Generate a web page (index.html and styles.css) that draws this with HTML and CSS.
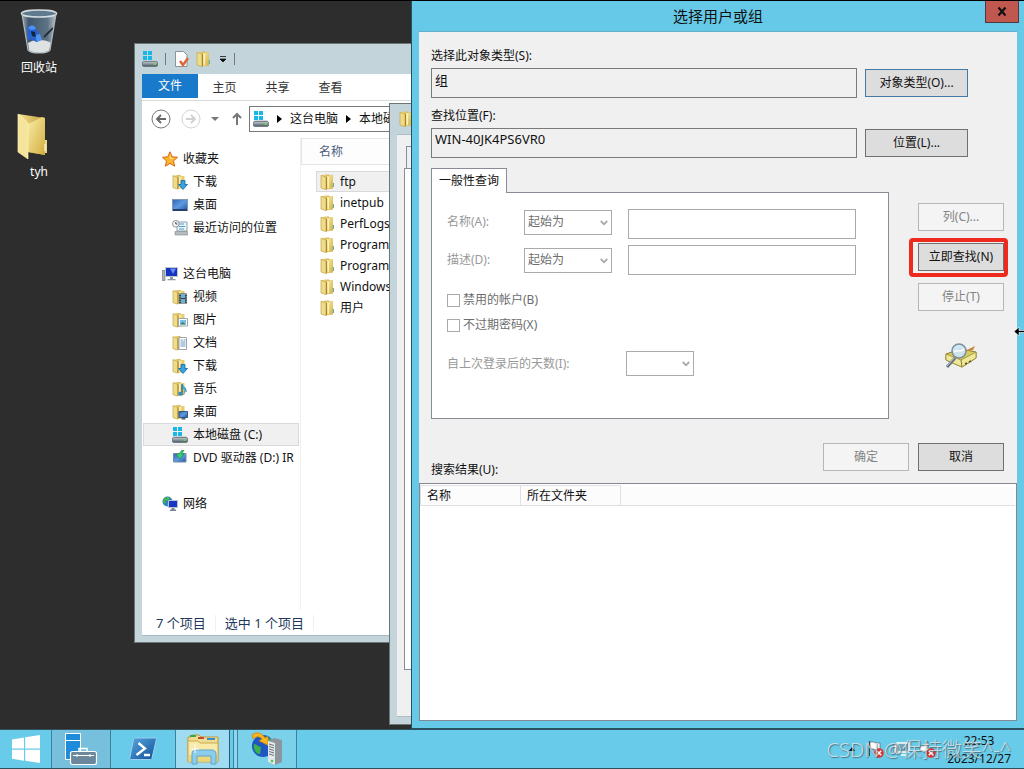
FILE: index.html
```html
<!DOCTYPE html>
<html lang="zh-CN">
<head>
<meta charset="utf-8">
<title>选择用户或组</title>
<link rel="stylesheet" href="styles.css">
</head>
<body>
<svg class="defs" aria-hidden="true">
  <defs>
    <linearGradient id="gold" x1="0" x2="1" y1="0" y2="1"><stop offset="0" stop-color="#f9eca6"/><stop offset="1" stop-color="#d3ae3f"/></linearGradient>
    <linearGradient id="goldDark" x1="0" x2="1"><stop offset="0" stop-color="#f3e294"/><stop offset="1" stop-color="#c49c36"/></linearGradient>
    <linearGradient id="screen" x1="0" x2="1" y1="0" y2="1"><stop offset="0" stop-color="#2f62b5"/><stop offset=".5" stop-color="#5f9be0"/><stop offset="1" stop-color="#1f55a8"/></linearGradient>
    <linearGradient id="metal" x1="0" x2="0" y1="0" y2="1"><stop offset="0" stop-color="#c4ccd1"/><stop offset="1" stop-color="#4e5c66"/></linearGradient>
    <linearGradient id="glass" x1="0" x2="1"><stop offset="0" stop-color="#9aa9b5"/><stop offset=".2" stop-color="#3f566b"/><stop offset=".75" stop-color="#5e7385"/><stop offset="1" stop-color="#b9c3ca"/></linearGradient>
    <linearGradient id="psBlue" x1="0" x2="1" y1="0" y2="1"><stop offset="0" stop-color="#5aa7e0"/><stop offset="1" stop-color="#0d4f96"/></linearGradient>
    <symbol id="folder" viewBox="0 0 16 16"><path d="M1 1.300 5.500.5H9l.5 1H13v13H6z" fill="url(#goldDark)"/><path d="M7 2 13 1.500v12.500l-6 1.500z" fill="url(#gold)"/><path d="M1 1.300 6 3v12.600l-5-1.600z" fill="#efdc8a" stroke="#c4a448" stroke-width=".7"/><path d="M6.500 3v12.400" stroke="#a8842a" stroke-width="1"/><path d="M8.300 3v11" stroke="#fff5c0" stroke-width="1.200"/><path d="M12.800 9h1.200v4h-1.200z" fill="#6fae9f"/></symbol>
    <symbol id="download" viewBox="0 0 16 16"><use href="#folder" width="15" height="16"/><path d="M9 6.500h4v4h2.500L11 15.500 6.500 10.500H9z" fill="#35a4e6" stroke="#17659f" stroke-width=".8"/></symbol>
    <symbol id="desktop" viewBox="0 0 16 16"><rect x=".5" y="2.500" width="15" height="11" fill="url(#screen)" stroke="#8297b3"/><path d="M1 12h14v2H1z" fill="#263f66"/></symbol>
    <symbol id="recent" viewBox="0 0 16 16"><path d="M5 2h10v9H5z" fill="#eef5f9" stroke="#8fa2ae"/><path d="M7 4h5M7 6.500h6M7 9h5" stroke="#4e9cc4"/><path d="M3 11.500h12.500V15H3z" fill="#b5bcc0" stroke="#7d878d" stroke-width=".6"/><circle cx="3.800" cy="3.800" r="3.300" fill="#f5f7f8" stroke="#8a959c"/><path d="M3.800 2v2h1.700" fill="none" stroke="#445"/></symbol>
    <symbol id="star" viewBox="0 0 16 16"><path d="m8 .8 2.200 5 5.300.5-4 3.600 1.200 5.300L8 12.400l-4.700 2.800 1.200-5.300-4-3.600 5.300-.5z" fill="#fbb62c" stroke="#d5661d"/><path d="M8 3 9.300 7 13 7.300l-5 1z" fill="#ffe68a"/></symbol>
    <symbol id="computer" viewBox="0 0 16 16"><rect x=".5" y="4.500" width="2.500" height="10" fill="#a9b3b9" stroke="#69747b" stroke-width=".6"/><rect x="3.500" y="1.500" width="12" height="9" fill="#1633c2" stroke="#c0c7cc"/><path d="M8 2.500h6L11 8z" fill="#6c8cf2"/><path d="M8 11h3v2h2.500v1.300h-8V13H8z" fill="#8c979e"/></symbol>
    <symbol id="video" viewBox="0 0 16 16"><use href="#folder" width="15" height="16"/><path d="M7 4.500h8v10H7z" fill="#3b4146"/><path d="M9 5h4v4H9zm0 5h4v4H9z" fill="#65b4d8"/><path d="M8 5v9M14.200 5v9" stroke="#dde3e6" stroke-dasharray="1 1.300"/></symbol>
    <symbol id="picture" viewBox="0 0 16 16"><use href="#folder" width="15" height="16"/><path d="M6.500 6.500h9v7.500h-9z" fill="#fff" stroke="#9aa7ad"/><path d="M8 8h6v4.500H8z" fill="#74bfe3"/><path d="m8 12.500 2.500-2.500 3.500 2.500z" fill="#3e7d58"/></symbol>
    <symbol id="document" viewBox="0 0 16 16"><use href="#folder" width="15" height="16"/><path d="M7 2.500h7.500v12H7z" fill="#fff" stroke="#9aa7ad"/><path d="M8.500 5h2m1 0h2M8.500 7h5m-5 2h5m-5 2h5" stroke="#6d93bd"/></symbol>
    <symbol id="music" viewBox="0 0 16 16"><use href="#folder" width="15" height="16"/><path d="M10 3.500v8" stroke="#1d78a8" stroke-width="1.500"/><path d="M10 3c1 3 5 3.500 4 8 0-2.500-2-3.500-4-4z" fill="#47a8d8" stroke="#1d78a8" stroke-width=".6"/><ellipse cx="8.700" cy="12.700" rx="2.500" ry="2" fill="#2b8fc4"/></symbol>
    <symbol id="deskfolder" viewBox="0 0 16 16"><use href="#folder" width="15" height="16"/><path d="M7 7.500h8.500v6H7z" fill="url(#screen)" stroke="#35587f"/><path d="M9.500 14h4v1.500h-4z" fill="#53606a"/></symbol>
    <symbol id="drive" viewBox="0 0 16 16"><path d="M1 0h4v4H1zM6 0h4v4H6zM1 5h4v4H1zM6 5h4v4H6z" fill="#17b8e8"/><path d="M2 9.300h12l1.800 2.200H.2z" fill="#c3cace"/><rect x=".4" y="10.500" width="15.200" height="4.900" rx="1.300" fill="url(#metal)" stroke="#56636c" stroke-width=".7"/><path d="M11.500 12.300h2.500v1.500h-2.500z" fill="#69df45"/></symbol>
    <symbol id="dvd" viewBox="0 0 16 16"><path d="M1.500 3.500h12.500v8.500H1.500z" fill="url(#screen)" stroke="#788da2"/><path d="M10 0 7 4H4l3.500 5L12 4H9.800L12 0z" fill="#39ce70" stroke="#178345" stroke-width=".6"/></symbol>
    <symbol id="network" viewBox="0 0 16 16"><circle cx="5.500" cy="5.500" r="5" fill="#2b81c9"/><path d="M2 3c2-3 5-2 6-1L6 5 4 4 3 8 1 6zm3 5 4-2v3l-3 1z" fill="#45b64c"/><path d="M6.500 4.500h9v7h-9z" fill="#1637c7" stroke="#b9c4cb"/><path d="M9.500 12h3v1.500H14V15H8v-1.500h1.500z" fill="#7b8790"/></symbol>
    <symbol id="chevron" viewBox="0 0 8 6"><path d="m.8 1 3.200 3.300L7.200 1" fill="none" stroke="#a9a9a9" stroke-width="1.800"/></symbol>
    <symbol id="crossbadge" viewBox="0 0 9 9"><circle cx="4.500" cy="4.500" r="4.300" fill="#d33"/><path d="m2.500 2.500 4 4m0-4-4 4" stroke="#fff" stroke-width="1.400"/></symbol>
  </defs>
</svg>

<main class="desktop">
  <div class="shortcut shortcut-bin">
    <svg class="bin-icon" viewBox="0 0 38 46"><path d="m2 4 6 37c3 4 19 4 22 0l6-37z" fill="url(#glass)"/><path d="m8 34 1 7c4 4 17 4 20 0l2-7c-5-4-18-4-23 0z" fill="#dfe2e3"/><path d="M7 19c3-4 8-3 9 1l3 4 2 7-5 2-4-3-4 1z" fill="#2563d0"/><path d="M8 19c3-4 7-3 8 1l-5 1zm7 7 5-1 2 6-5 2z" fill="#4d92ee"/><path d="m11 22 4 1 1 5-4-1z" fill="#14243d"/><path d="m33 19-9 9" stroke="#24313b" stroke-width="2"/><ellipse cx="19" cy="4.500" rx="17.500" ry="3.500" fill="#5f7a8f" stroke="#d6dde1" stroke-width="1.500"/><path d="m2 5 6 36c4 4 18 4 22 0l6-36" fill="none" stroke="#b2bbc0" stroke-width="1.200"/></svg>
    <span>回收站</span>
  </div>
  <div class="shortcut shortcut-folder">
    <svg class="big-folder" viewBox="0 0 32 46"><path d="m1 1 27 4v37l-17-3z" fill="url(#goldDark)"/><path d="m11 11 14-7 3 1v37l-17-3z" fill="url(#gold)"/><path d="m1 1 10 9v36L1 39z" fill="#f5e59a" stroke="#fff3b8" stroke-width=".7"/><path d="M28 27h2v13h-2z" fill="#e9d78a"/><path d="M28 31v7" stroke="#fff"/></svg>
    <span>tyh</span>
  </div>

  <section class="window explorer">
    <header class="quick-bar">
      <svg class="ico"><use href="#drive"/></svg><i class="bar"></i>
      <svg class="ico" viewBox="0 0 16 16"><path d="M2.500.500h8L14 4v11.500H2.500z" fill="#fdfdfd" stroke="#8d9497"/><path d="m7 10 3 4 5-7" fill="none" stroke="#e0643a" stroke-width="2.500"/></svg>
      <svg class="ico"><use href="#folder"/></svg>
      <svg class="mini" viewBox="0 0 8 8"><path d="M1 1.500h6M1 4h6L4 7z" fill="#111" stroke="#111" stroke-width=".8"/></svg><i class="bar"></i>
    </header>
    <div class="explorer-body">
      <nav class="ribbon"><button class="file-tab">文件</button><button>主页</button><button>共享</button><button>查看</button></nav>
      <div class="nav-row">
        <svg class="round" viewBox="0 0 20 20"><circle cx="10" cy="10" r="9" fill="none" stroke="#777"/><path d="M15 10H6m4-4-4 4 4 4" fill="none" stroke="#666" stroke-width="1.800"/></svg>
        <svg class="round" viewBox="0 0 20 20"><circle cx="10" cy="10" r="9" fill="none" stroke="#d4d4d4"/><path d="M5 10h9m-4-4 4 4-4 4" fill="none" stroke="#d0d0d0" stroke-width="1.800"/></svg>
        <svg class="mini" viewBox="0 0 8 8"><path d="M0 2h8L4 6z" fill="#777"/></svg>
        <svg class="up" viewBox="0 0 10 14"><path d="M5 13V2M1 6l4-4 4 4" fill="none" stroke="#777" stroke-width="2"/></svg>
        <div class="address"><svg class="ico"><use href="#drive"/></svg><svg class="tri" viewBox="0 0 5 8"><path d="m0 0 5 4-5 4z"/></svg><span>这台电脑</span><svg class="tri" viewBox="0 0 5 8"><path d="m0 0 5 4-5 4z"/></svg><span>本地磁盘 (C:)</span></div>
      </div>
      <div class="panes">
        <ul class="tree">
          <li class="root"><svg class="ico"><use href="#star"/></svg>收藏夹</li>
          <li><svg class="ico"><use href="#download"/></svg>下载</li>
          <li><svg class="ico"><use href="#desktop"/></svg>桌面</li>
          <li><svg class="ico"><use href="#recent"/></svg>最近访问的位置</li>
          <li class="root spaced"><svg class="ico"><use href="#computer"/></svg>这台电脑</li>
          <li><svg class="ico"><use href="#video"/></svg>视频</li>
          <li><svg class="ico"><use href="#picture"/></svg>图片</li>
          <li><svg class="ico"><use href="#document"/></svg>文档</li>
          <li><svg class="ico"><use href="#download"/></svg>下载</li>
          <li><svg class="ico"><use href="#music"/></svg>音乐</li>
          <li><svg class="ico"><use href="#deskfolder"/></svg>桌面</li>
          <li class="selected"><svg class="ico"><use href="#drive"/></svg>本地磁盘 (C:)</li>
          <li><svg class="ico"><use href="#dvd"/></svg>DVD 驱动器 (D:) IR</li>
          <li class="root spaced"><svg class="ico"><use href="#network"/></svg>网络</li>
        </ul>
        <div class="files">
          <div class="files-head">名称</div>
          <ul>
            <li class="selected"><svg class="ico"><use href="#folder"/></svg>ftp</li>
            <li><svg class="ico"><use href="#folder"/></svg>inetpub</li>
            <li><svg class="ico"><use href="#folder"/></svg>PerfLogs</li>
            <li><svg class="ico"><use href="#folder"/></svg>Program</li>
            <li><svg class="ico"><use href="#folder"/></svg>Program</li>
            <li><svg class="ico"><use href="#folder"/></svg>Windows</li>
            <li><svg class="ico"><use href="#folder"/></svg>用户</li>
          </ul>
        </div>
      </div>
      <footer class="status"><span>7 个项目</span><span>选中 1 个项目</span></footer>
    </div>
  </section>

  <section class="window properties">
    <header><svg class="ico"><use href="#folder"/></svg></header>
    <div class="properties-body"><div class="stub-tab"></div><div class="stub-page"></div></div>
  </section>

  <section class="window dialog">
    <header class="dialog-title"><h1>选择用户或组</h1><button class="close" aria-label="关闭"><svg viewBox="0 0 10 9"><path d="M1.500.500 8.500 8.500m0-8-7 8" stroke="#111" stroke-width="2.200"/></svg></button></header>
    <form class="dialog-body">
      <div class="field"><label for="type">选择此对象类型(S):</label><div class="field-row"><input id="type" value="组" readonly><button type="button" class="btn focused">对象类型(O)...</button></div></div>
      <div class="field"><label for="place">查找位置(F):</label><div class="field-row"><input id="place" value="WIN-40JK4PS6VR0" readonly><button type="button" class="btn">位置(L)...</button></div></div>
      <div class="query">
        <div class="query-main">
          <button type="button" class="tab">一般性查询</button>
          <div class="page">
            <div class="criterion"><label for="name">名称(A):</label><span class="pick"><select disabled aria-label="名称条件"><option>起始为</option></select><svg><use href="#chevron"/></svg></span><input id="name" disabled></div>
            <div class="criterion"><label for="desc">描述(D):</label><span class="pick"><select disabled aria-label="描述条件"><option>起始为</option></select><svg><use href="#chevron"/></svg></span><input id="desc" disabled></div>
            <div class="checks"><label><input type="checkbox" disabled>禁用的帐户(B)</label><label><input type="checkbox" disabled>不过期密码(X)</label></div>
            <div class="days"><label for="days">自上次登录后的天数(I):</label><span class="pick"><select id="days" disabled><option></option></select><svg><use href="#chevron"/></svg></span></div>
          </div>
        </div>
        <div class="side">
          <button type="button" class="btn" disabled>列(C)...</button>
          <div class="marked"><button type="button" class="btn">立即查找(N)</button></div>
          <button type="button" class="btn" disabled>停止(T)</button>
          <svg class="finder" viewBox="0 0 32 26"><path d="m1 11 15-5 15 3v6L17 24 1 17z" fill="#d8cc62" stroke="#8f7f2c"/><path d="m1 11 15 6 15-8v6l-14 9-16-7z" fill="#efe89a" stroke="#8f7f2c" stroke-width=".7"/><path d="m16 17 1 7" stroke="#8f7f2c"/><path d="m18 9 12-6-2 4z" fill="#c8862e"/><path d="m20 21 2-1m2-1 2-1" stroke="#55521f" stroke-width="1.500"/><path d="m10 15-8 9" stroke="#69727b" stroke-width="3"/><path d="m9 15-7 8" stroke="#c4ccd2"/><circle cx="14" cy="8" r="7" fill="#cbe6f6" fill-opacity=".9" stroke="#7e8e9b" stroke-width="1.500"/><path d="M9 9c4-3 7 1 10-3" fill="none" stroke="#fff" stroke-width="1.500"/></svg>
        </div>
      </div>
      <div class="actions"><span class="result-label" id="results">搜索结果(U):</span><button type="button" class="btn" disabled>确定</button><button type="button" class="btn">取消</button></div>
      <div class="results"><table aria-labelledby="results"><thead><tr><th class="col">名称</th><th class="col">所在文件夹</th><th></th></tr></thead></table></div>
    </form>
    <svg class="cursor" viewBox="0 0 12 9"><path d="M0 4.500 5 0v3.500h7v2H5V9z" fill="#000" stroke="#fff" stroke-width=".6"/></svg>
  </section>
</main>

<footer class="taskbar">
  <button class="task start" aria-label="开始"><svg viewBox="0 0 28 28"><path d="m0 4.500 12-2v11H0zM13.200 2.300 28 0v13.500H13.200zM0 14.700h12v11l-12-2zM13.200 14.700H28V28l-14.800-2.200z" fill="#fff"/></svg></button>
  <button class="task server" aria-label="服务器管理器"><svg viewBox="0 0 34 34"><path d="M1.500 1.500h15v26h-15z" fill="#1e8bdb" stroke="#fff"/><path d="M2 8.500h14" stroke="#fff"/><path d="M15 20v-3.500h8V20" fill="none" stroke="#fff" stroke-width="1.500"/><rect x="6.500" y="19.500" width="26" height="13" rx="2" fill="#6b879c" stroke="#fff" stroke-width="1.200"/><path d="M9 23.500h21M13 22v3m13-3v3" stroke="#fff"/></svg></button>
  <button class="task shell" aria-label="PowerShell"><svg viewBox="0 0 28 24"><path d="M6 1h20c1 0 1.500.5 1.300 1.500L23 21c-.3 1-1 1.500-2 1.500H2c-1 0-1.500-.5-1.200-1.500L4.500 2.300C4.700 1.500 5 1 6 1z" fill="url(#psBlue)" stroke="#9bd0ee"/><path d="m9.500 6 6.500 5.500-8.500 6.500M15 18h6" fill="none" stroke="#fff" stroke-width="2.300"/></svg></button>
  <button class="task files-task" aria-label="文件资源管理器"><svg viewBox="0 0 34 32"><path d="M2 4h3l1-2h7l2 2h17v24H2z" fill="#efdc8e" stroke="#bb9b3f"/><path d="M4 2h6v2H4z" fill="#35a856"/><path d="M12 4h6v2h-6z" fill="#c64a2c"/><path d="M21 5h8v2h-8z" fill="#3b8bd2"/><path d="M2 8h10l2 2h18v19H2z" fill="#f8eaa9" stroke="#c9aa4e"/><path d="M3 22h28v6H3z" fill="#ecd57a"/><path d="M6 31V21c0-3 2-4 4-4h16c2 0 4 1 4 4v10h-5v-8H11v8z" fill="#8ccdec" stroke="#5ea5cb"/><path d="M9 11v9m-4-4h8" stroke="#fff"/></svg></button>
  <button class="task iis" aria-label="IIS 管理器"><svg viewBox="0 0 32 34"><circle cx="12" cy="14" r="11" fill="#1e56c4"/><path d="M3 12c3 0 4 3 7 3l-1 7C5 22 2 17 3 12zm9-8 8 3-3 7-5-3z" fill="#3cb346"/><path d="M1 3c5-4 10-2 13 3l3-2v9L8 9l3-2C8 4 5 4 2 7z" fill="#f9b71e" stroke="#c67d12" stroke-width=".7"/><path d="m17 9 6-3 8 2v22l-7 3-7-3z" fill="#8d969c"/><path d="m17 9 7 2v22l-7-3z" fill="#e3e7e9"/><path d="m18 12 5 1.500m-5 1 5 1.500m-5 1 5 1.500m-5 1 5 1.500m-5 1 5 1.500" stroke="#6c757b"/><circle cx="21" cy="29" r="1.300" fill="#3fd04d"/></svg></button>
  <div class="tray">
    <svg class="tray-arrow" viewBox="0 0 6 4"><path d="m3 0 3 4H0z"/></svg>
    <svg class="tray-icon" viewBox="0 0 18 18"><path d="M2.500 1v15" stroke="#444"/><path d="M3 2h4l1 1h5v7H8L7 9H3z" fill="#fff" stroke="#555" stroke-width=".6"/><use href="#crossbadge" x="7" y="8" width="10" height="10"/></svg>
    <svg class="tray-icon" viewBox="0 0 18 18"><path d="M4 3h12v9H4zM8 15h6" fill="#6aa9c1" stroke="#fff" stroke-width="1.500"/><path d="M1 4h3v9H1z" fill="#fff" stroke="#444" stroke-width=".6"/></svg>
    <svg class="tray-icon" viewBox="0 0 18 18"><path d="M1 6h3l5-4v13l-5-4H1z" fill="#fff" stroke="#555" stroke-width=".6"/><use href="#crossbadge" x="7" y="8" width="10" height="10"/></svg>
    <div class="clock"><span>22:53</span><span>2023/12/27</span></div>
  </div>
  <span class="watermark">CSDN @保持微笑^-^</span>
</footer>
</body>
</html>
```
FILE: styles.css
```css
* { box-sizing: border-box; }

body {
  display: flex;
  flex-direction: column;
  height: 100vh;
  margin: 0;
  overflow: hidden;
  background: #2d2d2d;
  color: #111;
  font: 12px/20px "Noto Sans", "Noto Sans CJK SC", sans-serif;
}

ul { margin: 0; padding: 0; list-style: none; }
button, input, select { margin: 0; font: inherit; color: inherit; border-radius: 0; }
svg { display: block; flex: none; }
.defs { position: absolute; width: 0; height: 0; }
.ico { width: 16px; height: 16px; }
.mini { width: 8px; height: 8px; }

.desktop {
  position: relative;
  flex: 1;
  min-height: 0;
  border-top: 1px solid #000;
}

/* Desktop shortcuts */
.shortcut {
  position: absolute;
  left: 3px;
  width: 72px;
  display: flex;
  flex-direction: column;
  align-items: center;
  gap: 3px;
  color: #fff;
}
.shortcut-bin { top: 8px; }
.shortcut-folder { top: 112px; }
.bin-icon { width: 38px; height: 46px; }
.big-folder { width: 32px; height: 46px; margin-right: 12px; }

/* Windows */
.window {
  position: absolute;
  display: flex;
  flex-direction: column;
  border: 1px solid #6d7779;
  background: #c3d5db;
}

.explorer {
  left: 134px;
  top: 42px;
  bottom: 86px;
  width: 420px;
  padding: 0 7px 6px;
}
.quick-bar {
  display: flex;
  align-items: center;
  gap: 7px;
  height: 30px;
}
.bar { width: 1px; height: 12px; background: #6f7b80; }
.explorer-body {
  flex: 1;
  min-height: 0;
  display: flex;
  flex-direction: column;
  background: #fff;
  border-bottom: 1px solid #a9b9be;
}
.ribbon {
  display: flex;
  height: 27px;
  border-bottom: 1px solid #d9dadb;
}
.ribbon button {
  width: 53px;
  padding: 2px 0 0;
  border: 0;
  background: none;
  color: #333;
}
.ribbon .file-tab {
  width: 56px;
  height: 24px;
  padding: 0;
  background: #1979ca;
  color: #fff;
}
.nav-row {
  display: flex;
  align-items: center;
  gap: 10px;
  height: 36px;
  padding-left: 9px;
}
.round { width: 20px; height: 20px; }
.up { width: 10px; height: 14px; margin: 0 -3px 0 3px; }
.address {
  flex: 1;
  display: flex;
  align-items: center;
  gap: 8px;
  height: 26px;
  padding-left: 3px;
  border: 1px solid #777;
  white-space: nowrap;
}
.tri { width: 5px; height: 8px; }
.panes { flex: 1; display: flex; min-height: 0; padding-top: 1px; }
.tree {
  width: 159px;
  flex: none;
  padding-top: 9px;
  border-right: 1px solid #f0f0f0;
  white-space: nowrap;
}
.tree li {
  display: flex;
  align-items: center;
  gap: 5px;
  height: 23px;
  margin: 0 1px;
  padding-left: 28px;
  border: 1px solid transparent;
}
.tree .root { padding-left: 18px; }
.tree .spaced { margin-top: 23px; }
.tree .selected, .files .selected { background: #f0f0f0; border-color: #d9d9d9; }
.files { flex: 1; }
.files-head {
  height: 27px;
  padding: 3px 17px;
  border: 1px solid #e3e6e9;
  border-right: 0;
  background: #fdfdfe;
  color: #4c607a;
}
.files ul { padding: 6px 0 0 15px; }
.files li {
  display: flex;
  align-items: center;
  gap: 4px;
  height: 21px;
  padding-left: 3px;
  border: 1px solid transparent;
}
.status {
  display: flex;
  align-items: center;
  height: 25px;
  padding-left: 14px;
  font-size: 13px;
  color: #1e395b;
}
.status span {
  margin-right: 9px;
  padding-right: 9px;
  border-right: 1px solid #f0f0f0;
  line-height: 16px;
  white-space: nowrap;
}

.properties {
  left: 389px;
  top: 102px;
  bottom: 4px;
  width: 300px;
  padding: 0 7px 7px;
}
.properties header { height: 30px; padding: 7px 2px; }
.properties-body {
  flex: 1;
  display: flex;
  flex-direction: column;
  padding: 11px 7px 46px;
  border: 1px solid #b0bec3;
  border-width: 1px 0;
  background: #f0f0f0;
}
.stub-tab { height: 22px; margin-left: 2px; border: 1px solid #898c95; border-bottom: 0; }
.stub-page { flex: 1; border: 1px solid #898c95; background: #fff; }

/* Object picker */
.dialog {
  left: 411px;
  right: 0;
  top: 0;
  bottom: 0;
  padding: 0 7px 7px;
  border-color: #245264;
  border-width: 0 0 1px 1px;
  background: #67c9e8;
}
.dialog-title {
  position: relative;
  height: 30px;
}
.dialog-title h1 {
  margin: 0;
  font-size: 15px;
  line-height: 30px;
  font-weight: 400;
  text-align: center;
}
.close {
  position: absolute;
  top: 0;
  right: -2px;
  display: grid;
  place-items: center;
  width: 34px;
  height: 22px;
  padding: 0;
  border: 1px solid #4d3a40;
  border-top: 0;
  background: #c0584f;
}
.close svg { width: 10px; height: 9px; }
.dialog-body {
  flex: 1;
  min-height: 0;
  display: flex;
  flex-direction: column;
  padding-top: 14px;
  border-top: 1px solid #62aecb;
  background: #f0f0f0;
}
.field { padding: 0 49px 7px 12px; }
.field > label { display: block; margin-bottom: 2px; }
.field + .field > label { padding-top: 1px; }
.field-row { display: flex; align-items: center; gap: 8px; }
.field-row input {
  flex: 1;
  min-width: 0;
  height: 30px;
  padding: 0 3px 8px;
  border: 1px solid #7a7a7a;
  background: #f0f0f0;
  font-size: 13px;
}
.btn {
  height: 28px;
  width: 86px;
  padding: 0;
  border: 1px solid #707070;
  background: #ddd;
  white-space: nowrap;
}
.field-row .btn { width: 103px; }
.btn.focused { border-color: #4478a5; }
.btn:disabled { border-color: #b4b6b8; background: #f4f4f4; color: #838383; }

.query {
  display: flex;
  gap: 29px;
  padding: 3px 13px 0 12px;
}
.query-main { flex: 1; min-width: 0; }
.tab {
  position: relative;
  display: block;
  width: 76px;
  height: 25px;
  margin-bottom: -1px;
  padding: 0;
  border: 1px solid #898c95;
  border-bottom: 0;
  background: #fff;
}
.page {
  height: 227px;
  padding: 16px 32px 0 15px;
  border: 1px solid #898c95;
  background: #fff;
  color: #999;
}
.criterion {
  display: flex;
  align-items: center;
  height: 30px;
  margin-bottom: 6px;
}
.criterion label { width: 77px; }
.criterion:first-child label, .criterion:first-child .pick { padding-bottom: 4px; }
.criterion .pick { width: 88px; margin-right: 16px; }
.criterion input {
  flex: 1;
  min-width: 0;
  height: 30px;
  border: 1px solid #aaa;
  background: #fff;
}
.pick { position: relative; }
.pick select {
  display: block;
  appearance: none;
  width: 100%;
  height: 25px;
  padding: 0 3px;
  border: 1px solid #aaa;
  background: #fff;
  color: #6d6d6d;
  opacity: 1;
}
.pick svg { position: absolute; right: 4px; top: 10px; width: 8px; height: 6px; }
.checks { display: grid; gap: 5px; padding-top: 9px; color: #6d6d6d; }
.checks label { display: flex; align-items: center; gap: 3px; }
.checks input {
  appearance: none;
  width: 13px;
  height: 13px;
  border: 1px solid #aaa;
  background: #fff;
}
.days { display: flex; align-items: center; margin-top: 16px; }
.days label { width: 179px; }
.days .pick { width: 68px; }

.side {
  display: flex;
  flex-direction: column;
  align-items: center;
  gap: 12px;
  width: 86px;
  padding-top: 35px;
}
.marked { position: relative; }
.marked .btn { display: block; }
.marked::after {
  content: "";
  position: absolute;
  inset: -5px -4px -6px -9px;
  border: 4px solid #ee2a1d;
  border-radius: 4px;
  pointer-events: none;
}
.finder { width: 32px; height: 26px; margin-top: 20px; }

.actions {
  display: flex;
  gap: 9px;
  height: 37px;
  margin-top: 24px;
  padding: 0 13px 0 12px;
}
.result-label { flex: 1; align-self: flex-end; }
.results {
  flex: 1;
  min-height: 0;
  margin-top: 3px;
  padding: 1px 1px 1px 0;
  border: 1px solid #828790;
  background: #fff;
}
.results table { width: 100%; border-collapse: collapse; table-layout: fixed; }
.results th {
  height: 20px;
  padding: 0 6px;
  border-bottom: 1px solid #e0e0e0;
  background: #fcfcfc;
  font-weight: 400;
  line-height: 19px;
  text-align: left;
}
.results .col { width: 100px; border: 1px solid #e0e0e0; }
.cursor { position: absolute; right: -2px; top: 326px; width: 12px; height: 9px; }

/* Taskbar */
.taskbar {
  position: relative;
  display: flex;
  height: 40px;
  border-top: 1px solid #30505c;
  border-bottom: 1px solid #30505c;
  background: #67cbe9;
}
.task {
  display: grid;
  place-items: center;
  padding: 0;
  border: 0;
  border-right: 1px solid #3b8199;
  background: none;
}
.start { width: 52px; }
.start svg { width: 28px; height: 28px; }
.server { width: 59px; background: #76bfdd; }
.server svg { width: 34px; height: 34px; }
.shell { width: 65px; }
.shell svg { width: 28px; height: 24px; }
.files-task { width: 54px; background: #9fdcf2; border-right-color: #255e73; }
.files-task svg { width: 34px; height: 32px; }
.iis { width: 60px; margin-left: 7px; border-left: 1px solid #3b8199; background: #7bd0ea; }
.iis svg { width: 32px; height: 34px; }
.files-task + .iis { box-shadow: -3px 0 0 #8fd7ef, -4px 0 0 #3b8199; }
.tray {
  display: flex;
  align-items: center;
  gap: 8px;
  margin-left: auto;
  padding-right: 13px;
}
.tray-arrow { width: 6px; height: 4px; margin-right: 4px; }
.tray-icon { width: 18px; height: 18px; }
.clock {
  display: flex;
  flex-direction: column;
  align-items: center;
  margin-left: 2px;
  padding-top: 2px;
  line-height: 18px;
}
.watermark {
  position: absolute;
  right: 13px;
  top: 8px;
  font-size: 20px;
  line-height: 24px;
  font-weight: 300;
  color: rgba(225, 232, 236, .8);
  text-shadow: 1px 1px 1px rgba(70, 90, 100, .8);
  white-space: nowrap;
}
```
